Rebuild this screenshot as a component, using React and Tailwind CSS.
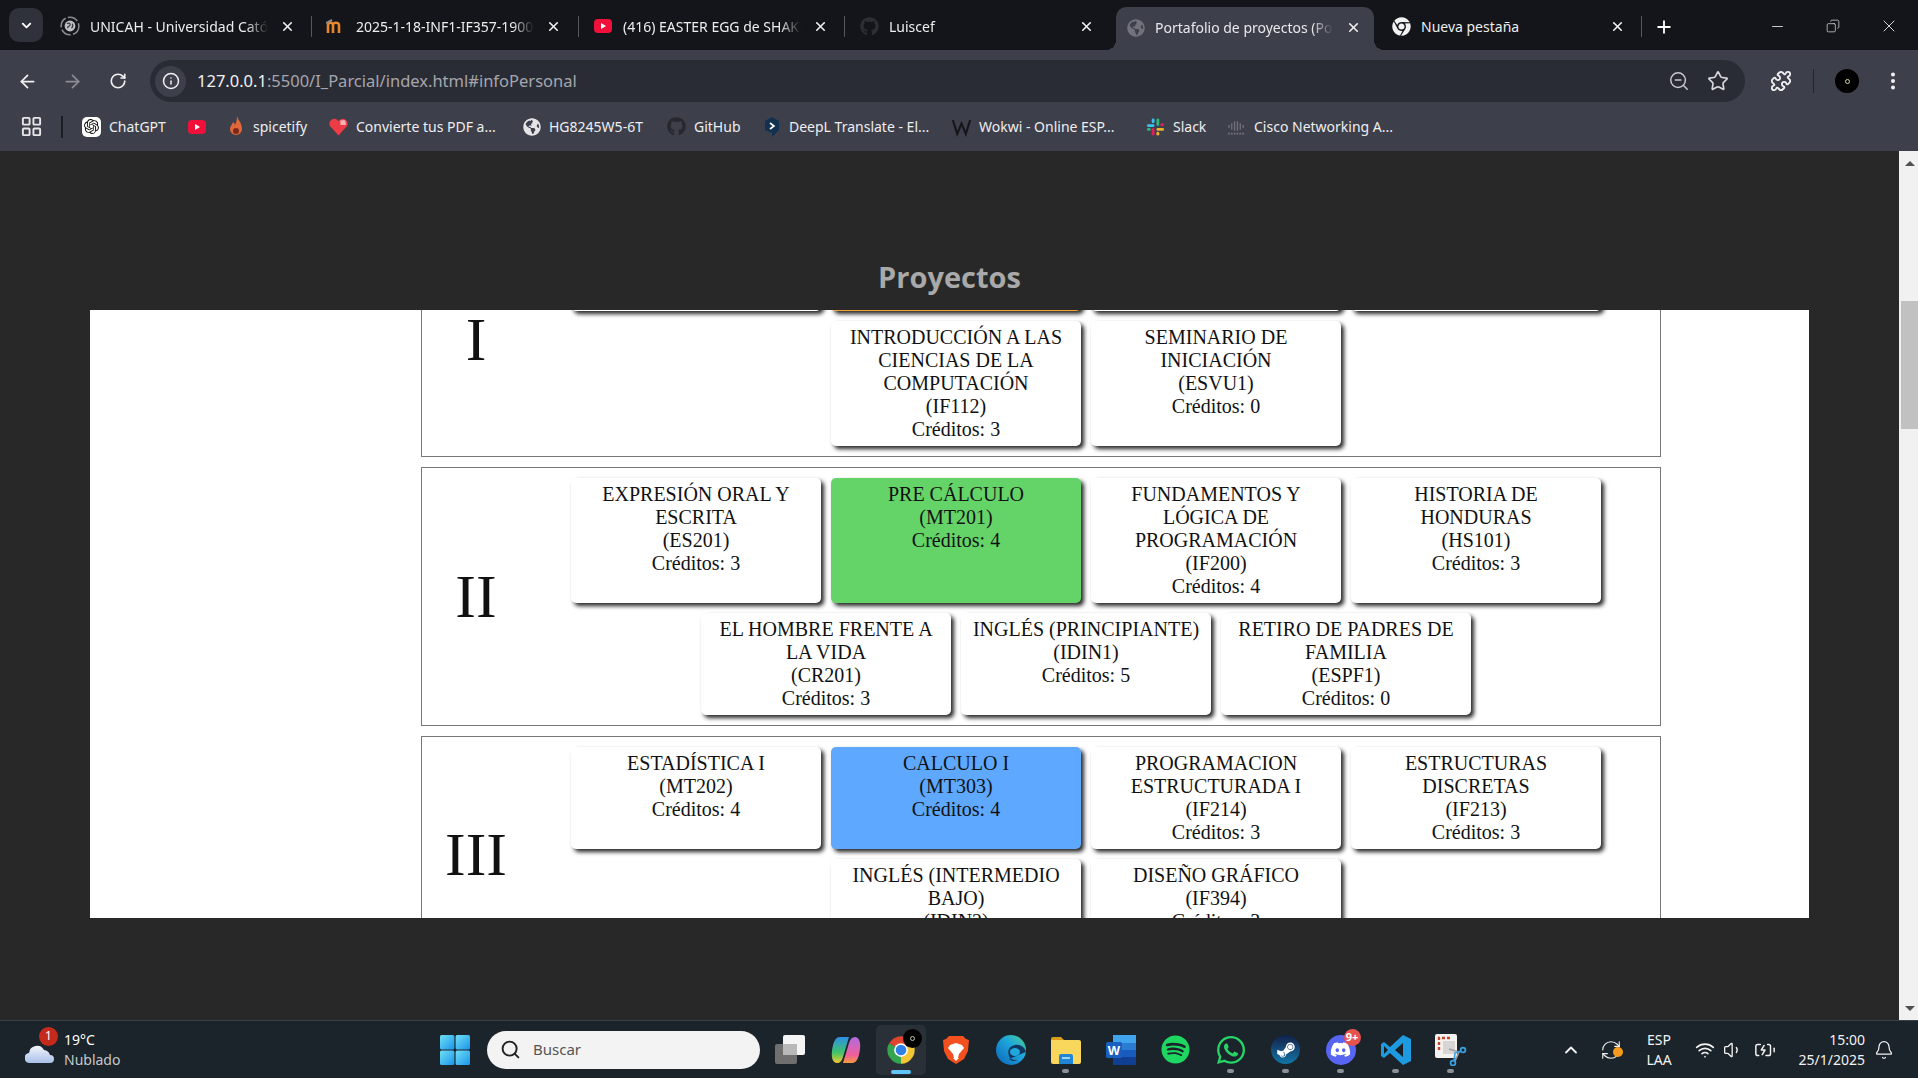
import {
  ArrowLeft, ArrowRight, RotateCw, Info, ZoomOut, Star, Puzzle, EllipsisVertical, X, Plus, Minus,
  Copy, ChevronDown, ChevronUp, LayoutGrid, Search, Volume1, Wifi, Bell, RefreshCw, BatteryCharging,
} from 'lucide-react';
import { FaGithub, FaChrome, FaGlobeAmericas, FaSpotify, FaWhatsapp, FaSteamSymbol, FaDiscord } from 'react-icons/fa';
import { SiOpenai } from 'react-icons/si';

const YoutubeIcon = () => (
  <svg width="18" height="14" viewBox="0 0 18 14">
    <rect width="18" height="14" rx="4" fill="#f0103a" />
    <path d="M7 4l5 3-5 3z" fill="#fff" />
  </svg>
);

const UnicahIcon = () => (
  <svg width="26" height="26" viewBox="0 0 26 26">
    <circle cx="13" cy="13" r="11.5" fill="none" stroke="#8a8b90" strokeWidth="2" strokeDasharray="14 3" />
    <circle cx="13" cy="13" r="7" fill="#bfc0c4" />
    <path d="M9 10c3-2 5 0 4 2s-4 1-3 4m6-6c1 2 1 4-1 6" stroke="#3c3d44" strokeWidth="1.6" fill="none" />
  </svg>
);

const MoodleIcon = () => (
  <svg width="20" height="16" viewBox="0 0 20 16">
    <path d="M2 15V7c0-3 5-3 5 0v8M7 7c0-3 6-3 6 0v8" stroke="#e8862b" strokeWidth="2.6" fill="none" />
    <path d="M0 5l6-3" stroke="#8b8b8b" strokeWidth="2" />
  </svg>
);

const SpicetifyIcon = () => (
  <svg width="16" height="22" viewBox="0 0 16 22">
    <path d="M9 0c1 4 5 7 5 13a6 6 0 0 1-12 0c0-3 2-4 3-7 1 1 2 2 2 3 1-2 2-5 2-9z" fill="#e0673a" />
    <circle cx="8" cy="15" r="3" fill="#7a2b18" />
  </svg>
);

const HeartIcon = () => (
  <svg width="20" height="20" viewBox="0 0 20 20">
    <path d="M10 19L1 9a5 5 0 0 1 9-5 5 5 0 0 1 9 5z" fill="#ee3c46" />
    <path d="M12 3h5l1 5h-6z" fill="#f7b0b3" />
  </svg>
);

const DeeplIcon = () => (
  <svg width="16" height="20" viewBox="0 0 16 20">
    <path d="M8 0l7 4v9l-7 7V16L1 13V4z" fill="#12304f" />
    <path d="M6 6l4 3-4 3" stroke="#fff" strokeWidth="1.6" fill="none" />
  </svg>
);

const WokwiIcon = () => (
  <svg width="22" height="20" viewBox="0 0 22 20">
    <path d="M1 2l5 16 5-12 5 12 5-16" stroke="#15161a" strokeWidth="2.4" fill="none" />
  </svg>
);

const SlackIcon = () => (
  <svg width="20" height="20" viewBox="0 0 20 20">
    <rect x="1" y="7" width="8" height="3" rx="1.5" fill="#36c5f0" />
    <rect x="6" y="1" width="3" height="5" rx="1.5" fill="#36c5f0" />
    <rect x="11" y="1" width="3" height="8" rx="1.5" fill="#2eb67d" />
    <rect x="15" y="6" width="4" height="3" rx="1.5" fill="#e01e5a" />
    <rect x="11" y="11" width="8" height="3" rx="1.5" fill="#ecb22e" />
    <rect x="11" y="15" width="3" height="4" rx="1.5" fill="#ecb22e" />
    <rect x="6" y="11" width="3" height="8" rx="1.5" fill="#e01e5a" />
    <rect x="1" y="11" width="4" height="3" rx="1.5" fill="#2eb67d" />
  </svg>
);

const CiscoIcon = () => (
  <svg width="20" height="18" viewBox="0 0 20 18">
    <path d="M2 7v3M5 5v7M8 3v10M11 3v10M14 5v7M17 7v3" stroke="#6f7079" strokeWidth="1.4" />
    <path d="M1 16h18" stroke="#6f7079" strokeWidth="2" strokeDasharray="2 1" />
  </svg>
);

const WindowsIcon = () => (
  <svg width="30" height="30" viewBox="0 0 30 30">
    <defs>
      <linearGradient id="win" x1="0" y1="0" x2="1" y2="1">
        <stop offset="0" stopColor="#6fe0f5" />
        <stop offset="1" stopColor="#1a95ea" />
      </linearGradient>
    </defs>
    <rect x="0" y="0" width="14.4" height="14.4" rx="1.5" fill="url(#win)" />
    <rect x="15.6" y="0" width="14.4" height="14.4" rx="1.5" fill="url(#win)" />
    <rect x="0" y="15.6" width="14.4" height="14.4" rx="1.5" fill="url(#win)" />
    <rect x="15.6" y="15.6" width="14.4" height="14.4" rx="1.5" fill="url(#win)" />
  </svg>
);

const TaskViewIcon = () => (
  <svg width="32" height="30" viewBox="0 0 32 30">
    <rect x="8" y="0" width="22" height="20" rx="2" fill="#f4f4f4" />
    <rect x="0" y="9" width="22" height="20" rx="2" fill="#6f6f6f" />
    <rect x="8" y="9" width="14" height="11" fill="#b8b8b8" />
  </svg>
);

const CopilotIcon = () => (
  <svg width="30" height="28" viewBox="0 0 30 28">
    <defs>
      <linearGradient id="cop1" x1="0" y1="0" x2="0" y2="1">
        <stop offset="0" stopColor="#2f8fe8" />
        <stop offset="0.6" stopColor="#3fc46a" />
        <stop offset="1" stopColor="#f6c92f" />
      </linearGradient>
      <linearGradient id="cop2" x1="0" y1="0" x2="0" y2="1">
        <stop offset="0" stopColor="#b06be0" />
        <stop offset="0.7" stopColor="#f0609a" />
        <stop offset="1" stopColor="#f59a3c" />
      </linearGradient>
    </defs>
    <path d="M9 1h9l-6 20c-1 4-3 6-6 6C2 27 0 22 1 15 2 7 4 1 9 1z" fill="url(#cop1)" />
    <path d="M21 27h-9l6-20c1-4 3-6 6-6 4 0 6 5 5 12-1 8-3 14-8 14z" fill="url(#cop2)" />
  </svg>
);

const ChromeIcon = () => (
  <svg width="30" height="30" viewBox="0 0 48 48">
    <path d="M24 24L5 13A22 22 0 0 1 43 13Z" fill="#e0442f" />
    <path d="M24 24L43 13A22 22 0 0 1 24 46Z" fill="#f4c534" />
    <path d="M24 24L24 46A22 22 0 0 1 5 13Z" fill="#35a44f" />
    <circle cx="24" cy="24" r="11" fill="#fff" />
    <circle cx="24" cy="24" r="8.5" fill="#2f7fe6" />
  </svg>
);

const BraveIcon = () => (
  <svg width="28" height="30" viewBox="0 0 28 30">
    <path d="M7 1h14l3 3 3 1-1 11-4 8-8 5-8-5-4-8L1 5l3-1z" fill="#f2501f" />
    <path d="M8 10l6-2 6 2 2 3-5 6-1 4h-4l-1-4-5-6z" fill="#fff" />
    <path d="M11 23h6l-3 3z" fill="#fff" />
  </svg>
);

const EdgeIcon = () => (
  <svg width="30" height="30" viewBox="0 0 30 30">
    <defs>
      <linearGradient id="edg" x1="0" y1="1" x2="1" y2="0">
        <stop offset="0" stopColor="#0c62b8" />
        <stop offset="0.6" stopColor="#1ea8dc" />
        <stop offset="1" stopColor="#4fd08a" />
      </linearGradient>
    </defs>
    <circle cx="15" cy="15" r="15" fill="url(#edg)" />
    <path d="M30 17c-1-5-6-8-11-7-6 1-8 6-6 11 1 3 5 5 9 4-3 2-7 1-9-1" fill="#12375f" />
    <ellipse cx="19" cy="17" rx="5" ry="4" fill="#1ea8dc" />
  </svg>
);

const FolderIcon = () => (
  <svg width="30" height="28" viewBox="0 0 30 28">
    <path d="M0 3a2 2 0 0 1 2-2h8l3 3h-13z" fill="#d99c16" />
    <path d="M0 4h28a2 2 0 0 1 2 2v20a2 2 0 0 1-2 2H2a2 2 0 0 1-2-2z" fill="#f9d65c" />
    <path d="M8 28v-8a2 2 0 0 1 2-2h10a2 2 0 0 1 2 2v8z" fill="#1f86d6" />
    <rect x="11" y="21" width="8" height="2" fill="#9fd4f6" />
  </svg>
);

const WordIcon = () => (
  <svg width="30" height="30" viewBox="0 0 30 30">
    <rect x="7" y="0" width="23" height="8" fill="#41a5ee" />
    <rect x="7" y="8" width="23" height="7" fill="#2b7cd3" />
    <rect x="7" y="15" width="23" height="7" fill="#185abd" />
    <rect x="7" y="22" width="23" height="8" fill="#103f91" />
    <rect x="0" y="7" width="16" height="16" rx="1.5" fill="#1a5fc0" />
    <text x="8" y="20" textAnchor="middle" fontSize="13" fontWeight="700" fill="#fff" fontFamily="Liberation Sans, sans-serif">W</text>
  </svg>
);

const VsCodeIcon = () => (
  <svg width="30" height="30" viewBox="0 0 30 30">
    <path d="M22 0l8 4v22l-8 4-13-12-6 5-3-2v-12l3-2 6 5z" fill="#1e9ae0" />
    <path d="M22 8l-8 7 8 7z" fill="#1a1f26" />
    <path d="M3 11l4 4-4 4z" fill="#1a1f26" />
  </svg>
);

const SnipIcon = () => (
  <svg width="32" height="32" viewBox="0 0 32 32">
    <rect x="0" y="0" width="22" height="24" rx="2" fill="#f4f2f0" />
    <path d="M4 16V4h12" stroke="#c8452c" strokeWidth="2.4" strokeDasharray="3 2" fill="none" />
    <rect x="8" y="7" width="12" height="13" fill="#d8d6d4" />
    <path d="M14 15l10 3-4 9" stroke="#a0a0a0" strokeWidth="1.6" fill="none" />
    <circle cx="28" cy="16" r="2.4" fill="none" stroke="#3a9ee0" strokeWidth="1.8" />
    <circle cx="18" cy="29" r="2.4" fill="none" stroke="#3a9ee0" strokeWidth="1.8" />
    <path d="M26 17l-6 2-1 8" stroke="#3a9ee0" strokeWidth="1.6" fill="none" />
  </svg>
);

const CloudIcon = () => (
  <svg width="30" height="22" viewBox="0 0 30 22">
    <defs>
      <linearGradient id="cld" x1="0" y1="0" x2="0" y2="1">
        <stop offset="0" stopColor="#f2f5fb" />
        <stop offset="1" stopColor="#a9bfea" />
      </linearGradient>
    </defs>
    <path d="M5 21a5 5 0 0 1-1-10 8 8 0 0 1 15-3 7 7 0 0 1 6 5 4 4 0 0 1 0 8z" fill="url(#cld)" />
  </svg>
);

const tabs = [
  { title: 'UNICAH - Universidad Católica', icon: <UnicahIcon />, width: 'w-[266px]', sep: true },
  { title: '2025-1-18-INF1-IF357-1900', icon: <MoodleIcon />, width: 'w-[267px]', sep: true },
  { title: '(416) EASTER EGG de SHAKIRA', icon: <YoutubeIcon />, width: 'w-[266px]', sep: true },
  { title: 'Luiscef', icon: <FaGithub size={19} color="#2c2e34" />, width: 'w-[271px]', sep: false },
];

const bookmarks = [
  {
    name: 'ChatGPT',
    width: 'w-[105px]',
    icon: (
      <span className="flex h-[20px] w-[20px] items-center justify-center rounded-[5px] bg-white">
        <SiOpenai size={15} color="#111" />
      </span>
    ),
  },
  { name: '', width: 'w-[39px]', icon: <YoutubeIcon /> },
  { name: 'spicetify', width: 'w-[103px]', icon: <SpicetifyIcon /> },
  { name: 'Convierte tus PDF a...', width: 'w-[193px]', icon: <HeartIcon /> },
  { name: 'HG8245W5-6T', width: 'w-[145px]', icon: <FaGlobeAmericas size={18} color="#e4e4e6" /> },
  { name: 'GitHub', width: 'w-[95px]', icon: <FaGithub size={19} color="#26282e" /> },
  { name: 'DeepL Translate - El...', width: 'w-[190px]', icon: <DeeplIcon /> },
  { name: 'Wokwi - Online ESP...', width: 'w-[194px]', icon: <WokwiIcon /> },
  { name: 'Slack', width: 'w-[81px]', icon: <SlackIcon /> },
  { name: 'Cisco Networking A...', width: 'w-[190px]', icon: <CiscoIcon /> },
];

const semesters = [
  {
    numeral: 'I',
    clipped: true,
    rows: [
      { title: 'INTRODUCCIÓN A LAS CIENCIAS DE LA COMPUTACIÓN', code: 'IF112', credits: 3 },
      { title: 'SEMINARIO DE INICIACIÓN', code: 'ESVU1', credits: 0 },
    ],
  },
  {
    numeral: 'II',
    rows: [
      { title: 'EXPRESIÓN ORAL Y ESCRITA', code: 'ES201', credits: 3 },
      { title: 'PRE CÁLCULO', code: 'MT201', credits: 4, bg: 'bg-[#65d468]' },
      { title: 'FUNDAMENTOS Y LÓGICA DE PROGRAMACIÓN', code: 'IF200', credits: 4 },
      { title: 'HISTORIA DE HONDURAS', code: 'HS101', credits: 3 },
      { title: 'EL HOMBRE FRENTE A LA VIDA', code: 'CR201', credits: 3 },
      { title: 'INGLÉS (PRINCIPIANTE)', code: 'IDIN1', credits: 5 },
      { title: 'RETIRO DE PADRES DE FAMILIA', code: 'ESPF1', credits: 0 },
    ],
  },
  {
    numeral: 'III',
    rows: [
      { title: 'ESTADÍSTICA I', code: 'MT202', credits: 4 },
      { title: 'CALCULO I', code: 'MT303', credits: 4, bg: 'bg-[#5ea8ff]' },
      { title: 'PROGRAMACION ESTRUCTURADA I', code: 'IF214', credits: 3 },
      { title: 'ESTRUCTURAS DISCRETAS', code: 'IF213', credits: 3 },
      { title: 'INGLÉS (INTERMEDIO BAJO)', code: 'IDIN2', credits: 5 },
      { title: 'DISEÑO GRÁFICO', code: 'IF394', credits: 3 },
    ],
  },
];

const cardBase = 'w-[250px] rounded-[5px] px-[10px] py-[5px] text-center text-[20px] leading-[23px] text-[#111] shadow-[3px_3px_4px_rgba(0,0,0,0.85)]';

function Tab({ tab }) {
  return (
    <div className={`relative flex h-[43px] shrink-0 items-center pb-[5px] pl-[14px] ${tab.width}`}>
      <span className="flex w-[20px] justify-center">{tab.icon}</span>
      <span className="ml-[10px] w-[178px] overflow-hidden whitespace-nowrap text-[14px] text-[#eceded] [mask-image:linear-gradient(to_right,black_88%,transparent)]">
        {tab.title}
      </span>
      <X size={15} strokeWidth={2.6} color="#f0f0f0" className="ml-[12px]" />
      {tab.sep && <span className="absolute right-0 top-[9px] h-[21px] w-px bg-[#55565f]" />}
    </div>
  );
}

function TabStrip() {
  return (
    <div className="flex h-[50px] shrink-0 items-end bg-[#14151a]">
      <div className="mb-[8px] ml-[9px] mr-[3px] flex h-[34px] w-[34px] items-center justify-center rounded-[10px] bg-[#2f313b]">
        <ChevronDown size={15} strokeWidth={3} color="#fff" />
      </div>
      {tabs.map((tab) => (
        <Tab key={tab.title} tab={tab} />
      ))}
      <div className="relative flex h-[43px] w-[258px] shrink-0 items-center rounded-t-[10px] bg-[#3d3f4b] pb-[2px] pl-[10px]">
        <span className="absolute bottom-0 left-[-10px] h-[10px] w-[10px] bg-[radial-gradient(circle_at_0_0,transparent_10px,#3d3f4b_10px)]" />
        <span className="flex w-[20px] justify-center"><FaGlobeAmericas size={18} color="#71727b" /></span>
        <span className="ml-[9px] w-[178px] overflow-hidden whitespace-nowrap text-[14px] text-[#e8e8ea] [mask-image:linear-gradient(to_right,black_88%,transparent)]">
          Portafolio de proyectos (Portafolio)
        </span>
        <X size={15} strokeWidth={2.6} color="#f0f0f0" className="ml-[13px]" />
        <span className="absolute bottom-0 right-[-10px] h-[10px] w-[10px] bg-[radial-gradient(circle_at_100%_0,transparent_10px,#3d3f4b_10px)]" />
      </div>
      <div className="relative flex h-[43px] w-[268px] shrink-0 items-center pb-[5px] pl-[17px]">
        <span className="flex w-[20px] justify-center"><FaChrome size={19} color="#f2f2f2" /></span>
        <span className="ml-[10px] w-[178px] text-[14px] text-[#eceded]">Nueva pestaña</span>
        <X size={15} strokeWidth={2.6} color="#f0f0f0" className="ml-[11px]" />
        <span className="absolute right-0 top-[9px] h-[21px] w-px bg-[#55565f]" />
      </div>
      <div className="mb-[13px] flex w-[44px] justify-center">
        <Plus size={20} strokeWidth={2.2} color="#fff" />
      </div>
      <div className="mb-[14px] ml-auto flex items-center">
        <span className="flex w-[55px] justify-center"><Minus size={17} strokeWidth={1.2} color="#e8e8e8" /></span>
        <span className="flex w-[55px] justify-center"><Copy size={14} strokeWidth={1.2} color="#e8e8e8" className="-scale-x-100" /></span>
        <span className="flex w-[58px] justify-center"><X size={20} strokeWidth={1.1} color="#e8e8e8" /></span>
      </div>
    </div>
  );
}

function Toolbar() {
  return (
    <div className="flex h-[52px] shrink-0 items-end pl-[5px]">
      <span className="flex h-[42px] w-[45px] items-center justify-center"><ArrowLeft size={21} strokeWidth={2} color="#f1f1f2" /></span>
      <span className="flex h-[42px] w-[45px] items-center justify-center"><ArrowRight size={21} strokeWidth={2} color="#8b8c94" /></span>
      <span className="flex h-[42px] w-[45px] items-center justify-center"><RotateCw size={18} strokeWidth={2.2} color="#f1f1f2" /></span>
      <div className="ml-[10px] flex h-[42px] w-[1595px] items-center rounded-full bg-[#2a2c35] pl-[5px] pr-[16px]">
        <span className="flex h-[31px] w-[31px] items-center justify-center rounded-full bg-[#3d3f4b]">
          <Info size={18} strokeWidth={2} color="#f1f1f2" />
        </span>
        <span className="ml-[11px] whitespace-nowrap text-[16.5px] text-[#a5a6ad]">
          <span className="text-[#f1f1f2]">127.0.0.1</span>:5500/I_Parcial/index.html#infoPersonal
        </span>
        <span className="ml-auto flex gap-[17px]">
          <ZoomOut size={22} strokeWidth={1.6} color="#c9cacf" />
          <Star size={22} strokeWidth={1.8} color="#d8d9dc" />
        </span>
      </div>
      <span className="ml-[24px] flex h-[42px] w-[24px] items-center justify-center"><Puzzle size={22} strokeWidth={2} color="#f1f1f2" /></span>
      <span className="mb-[9px] ml-[20px] h-[24px] w-px bg-[#23242b]" />
      <span className="mb-[9px] ml-[21px] flex h-[24px] w-[24px] items-center justify-center rounded-full bg-black">
        <span className="h-[5px] w-[5px] rounded-full border border-[#d8d8a0]" />
      </span>
      <span className="ml-[22px] flex h-[42px] w-[24px] items-center justify-center"><EllipsisVertical size={22} strokeWidth={2.4} color="#f1f1f2" /></span>
    </div>
  );
}

function Bookmarks() {
  return (
    <div className="flex h-[49px] shrink-0 items-center pl-[20px]">
      <LayoutGrid size={23} strokeWidth={2} color="#e8e8ea" />
      <span className="ml-[18px] h-[22px] w-[2px] bg-[#1c1d22]" />
      <div className="ml-[19px] flex items-center">
        {bookmarks.map((b) => (
          <div key={b.name || 'yt'} className={`flex shrink-0 items-center gap-[8px] ${b.width}`}>
            <span className="flex w-[19px] shrink-0 justify-center">{b.icon}</span>
            {b.name && <span className="whitespace-nowrap text-[14px] text-[#eeeef0]">{b.name}</span>}
          </div>
        ))}
      </div>
    </div>
  );
}

function Card({ item }) {
  return (
    <div className={`${cardBase} ${item.bg || 'bg-white'}`}>
      <div>{item.title}</div>
      <div>({item.code})</div>
      <div>Créditos: {item.credits}</div>
    </div>
  );
}

function Semester({ semester }) {
  return (
    <div className="flex items-center border border-[#777]">
      <div className="w-[108px] shrink-0 text-center font-['Liberation_Serif',serif] text-[62px] text-[#111]">
        {semester.numeral}
      </div>
      <div className="flex flex-1 flex-wrap justify-center gap-[10px] py-[10px] pr-[18px]">
        {/* this row has scrolled out of the panel, only its bottom edge shows */}
        {semester.clipped && (
          <>
            <div className={`${cardBase} h-[79px] bg-white`} />
            <div className={`${cardBase} h-[79px] bg-[#f0a030]`} />
            <div className={`${cardBase} h-[79px] bg-white`} />
            <div className={`${cardBase} h-[79px] bg-white`} />
          </>
        )}
        {semester.rows.map((item) => (
          <Card key={item.code} item={item} />
        ))}
      </div>
    </div>
  );
}

function Scrollbar() {
  return (
    <div className="flex w-[19px] shrink-0 flex-col bg-[#f1f1f1] pl-[2px]">
      <div className="flex h-[24px] items-center justify-center">
        <span className="h-0 w-0 border-x-[5px] border-b-[5px] border-x-transparent border-b-[#505050]" />
      </div>
      <div className="h-[126px]" />
      <div className="h-[128px] bg-[#c1c1c1]" />
      <div className="flex-1" />
      <div className="flex h-[24px] items-center justify-center">
        <span className="h-0 w-0 border-x-[5px] border-t-[5px] border-x-transparent border-t-[#505050]" />
      </div>
    </div>
  );
}

function TaskIcon({ children, dot }) {
  return (
    <div className="relative flex h-full w-[55px] shrink-0 items-center justify-center">
      {children}
      {dot && <span className="absolute bottom-[5px] h-[4px] w-[7px] rounded-full bg-[#8d9196]" />}
    </div>
  );
}

function Taskbar() {
  return (
    <div className="flex h-[58px] shrink-0 items-center border-t border-[#3b4045] bg-[#1b232b] font-['Noto_Sans',sans-serif]">
      <div className="flex w-[427px] shrink-0 items-center pl-[25px]">
        <div className="relative mt-[6px]">
          <CloudIcon />
          <span className="absolute left-[14px] top-[-15px] flex h-[19px] w-[19px] items-center justify-center rounded-full bg-[#c42b1c] text-[12px] text-white">1</span>
        </div>
        <div className="ml-[9px] text-[14px] leading-[20px]">
          <div className="text-white">19°C</div>
          <div className="text-[#c6c9cc]">Nublado</div>
        </div>
      </div>
      <TaskIcon><WindowsIcon /></TaskIcon>
      <div className="ml-[5px] mr-[3px] flex h-[38px] w-[273px] shrink-0 items-center rounded-full bg-[#f3f3f3] pl-[13px]">
        <Search size={21} strokeWidth={2.2} color="#222" />
        <span className="ml-[12px] text-[15px] text-[#555]">Buscar</span>
      </div>
      <TaskIcon><TaskViewIcon /></TaskIcon>
      <TaskIcon><CopilotIcon /></TaskIcon>
      <div className="relative flex h-full w-[55px] shrink-0 items-center justify-center">
        <div className="relative flex h-[50px] w-[50px] items-center justify-center rounded-[5px] bg-[#2a3037]">
          <ChromeIcon />
          <span className="absolute right-[4px] top-[4px] flex h-[19px] w-[19px] items-center justify-center rounded-full bg-black">
            <span className="h-[5px] w-[5px] rounded-full border border-[#b8c8b0]" />
          </span>
          <span className="absolute bottom-[1px] h-[4px] w-[20px] rounded-full bg-[#60c5f5]" />
        </div>
      </div>
      <TaskIcon><BraveIcon /></TaskIcon>
      <TaskIcon><EdgeIcon /></TaskIcon>
      <TaskIcon dot><FolderIcon /></TaskIcon>
      <TaskIcon><WordIcon /></TaskIcon>
      <TaskIcon><FaSpotify size={29} color="#1ed760" /></TaskIcon>
      <TaskIcon dot><FaWhatsapp size={32} color="#25d366" /></TaskIcon>
      <TaskIcon dot>
        <span className="flex h-[29px] w-[29px] items-center justify-center rounded-full bg-gradient-to-b from-[#10214a] to-[#0f77a8]">
          <FaSteamSymbol size={20} color="#fff" />
        </span>
      </TaskIcon>
      <TaskIcon dot>
        <span className="relative flex h-[30px] w-[30px] items-center justify-center rounded-full bg-[#5865f2]">
          <FaDiscord size={21} color="#fff" />
          <span className="absolute right-[-5px] top-[-6px] flex h-[17px] w-[17px] items-center justify-center rounded-full bg-[#e5534f] text-[11px] font-bold text-white">9+</span>
        </span>
      </TaskIcon>
      <TaskIcon dot><VsCodeIcon /></TaskIcon>
      <TaskIcon dot><SnipIcon /></TaskIcon>

      <span className="ml-[78px] flex w-[30px] justify-center"><ChevronUp size={20} strokeWidth={2.2} color="#f2f2f2" /></span>
      <span className="relative ml-[10px] flex w-[30px] justify-center">
        <RefreshCw size={22} strokeWidth={1.2} color="#f2f2f2" />
        <span className="absolute right-[3px] top-[8px] h-[10px] w-[10px] rounded-full bg-[#f59a1c]" />
      </span>
      <div className="ml-[11px] w-[44px] text-center text-[14px] leading-[20px] text-[#f2f2f2]">
        <div>ESP</div>
        <div>LAA</div>
      </div>
      <span className="ml-[11px] flex w-[26px] justify-center"><Wifi size={20} strokeWidth={2} color="#f2f2f2" /></span>
      <span className="ml-[2px] flex w-[26px] justify-center"><Volume1 size={20} strokeWidth={1.6} color="#f2f2f2" /></span>
      <span className="ml-[6px] flex w-[26px] justify-center"><BatteryCharging size={22} strokeWidth={1.6} color="#f2f2f2" /></span>
      <div className="ml-[7px] w-[80px] text-right text-[14px] leading-[20px] text-[#f2f2f2]">
        <div>15:00</div>
        <div>25/1/2025</div>
      </div>
      <span className="ml-[7px] flex w-[24px] justify-center"><Bell size={20} strokeWidth={1.5} color="#f2f2f2" /></span>
    </div>
  );
}

export default function App() {
  return (
    <div className="flex h-[1078px] w-[1918px] flex-col overflow-hidden bg-[#3d3f4b] font-['Noto_Sans',sans-serif]">
      <TabStrip />
      <Toolbar />
      <Bookmarks />
      <div className="flex min-h-0 flex-1">
        <main className="min-w-0 flex-1 bg-[#282828] pt-[106px]">
          <h1 className="mb-[13px] text-center font-['Open_Sans',sans-serif] text-[29px] font-bold leading-[40px] text-[#a9a9a9]">
            Proyectos
          </h1>
          <div className="mx-[90px] h-[608px] overflow-hidden bg-white font-['Liberation_Serif',serif]">
            <div className="ml-[331px] -mt-[89px] flex w-[1240px] flex-col gap-[10px]">
              {semesters.map((s) => (
                <Semester key={s.numeral} semester={s} />
              ))}
            </div>
          </div>
        </main>
        <Scrollbar />
      </div>
      <Taskbar />
    </div>
  );
}
